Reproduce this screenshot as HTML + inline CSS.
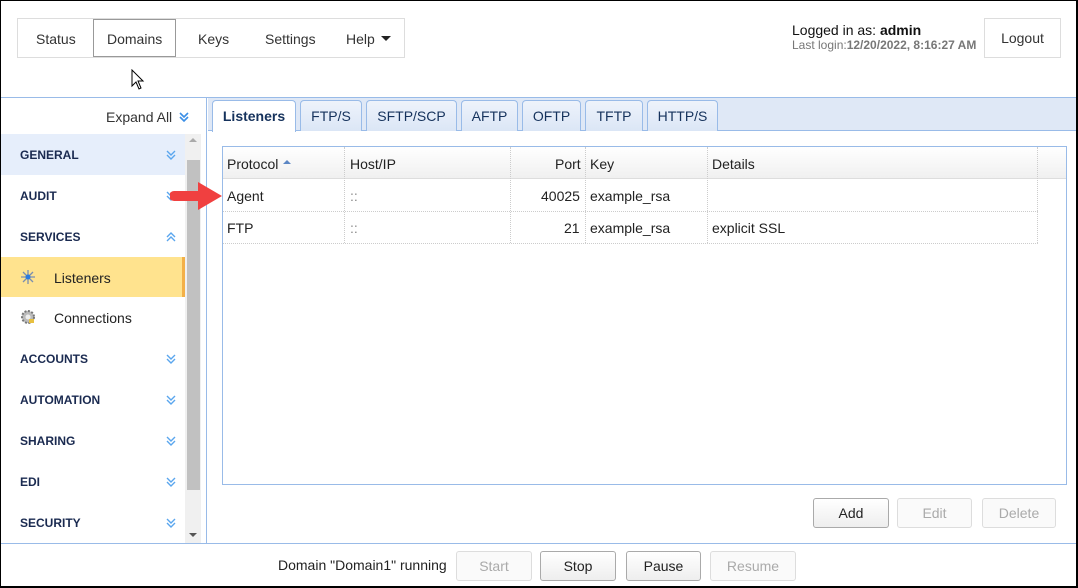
<!DOCTYPE html>
<html><head><meta charset="utf-8"><style>
*{box-sizing:border-box;margin:0;padding:0}
body{width:1078px;height:588px;font-family:"Liberation Sans",Arial,sans-serif;font-size:14px;color:#222;background:#fff;position:relative;overflow:hidden}
.frame{position:absolute;left:0;top:0;width:1078px;height:588px;border:1px solid #000;border-right-width:2px;border-bottom-width:2px;pointer-events:none;z-index:10}
.abs{position:absolute}
.nav{left:17px;top:18px;width:388px;height:40px;border:1px solid #ddd}
.nav span{position:absolute;top:12px;color:#333}
.dom{left:93px;top:19px;width:83px;height:38px;border:1px solid #999}
.btn{position:absolute;border:1px solid #aaa;border-radius:3px;background:linear-gradient(#fff,#eee);text-align:center;color:#222;font-size:14px}
.btn.dis{border-color:#ddd;color:#aaa;background:#fafafa}
.side .h{position:absolute;left:20px;font-weight:bold;font-size:12px;color:#1a2a50}
.chev{position:absolute;left:165px;width:12px;height:12px}
.tab{position:absolute;top:100px;height:31px;border:1px solid #99bbe8;border-bottom:none;border-radius:4px 4px 0 0;background:linear-gradient(#eef3fb,#dbe6f6);color:#15325c;text-align:center;line-height:30px;font-size:14px}
.cell{position:absolute;font-size:14px}
.vl{position:absolute;width:0;border-left:1px dotted #ccc}
.hl{position:absolute;height:0;border-top:1px dotted #ccc;left:223px;width:815px}
</style></head><body>
<div class="frame"></div>
<!-- header -->
<div class="abs nav"></div>
<div class="abs dom"></div>
<div class="abs" style="left:36px;top:31px;color:#333">Status</div>
<div class="abs" style="left:107px;top:31px;color:#333">Domains</div>
<div class="abs" style="left:198px;top:31px;color:#333">Keys</div>
<div class="abs" style="left:265px;top:31px;color:#333">Settings</div>
<div class="abs" style="left:346px;top:31px;color:#333">Help</div>
<div class="abs" style="left:381px;top:36px;border-left:5px solid transparent;border-right:5px solid transparent;border-top:5px solid #222"></div>
<svg class="abs" style="left:131px;top:69px" width="16" height="22" viewBox="0 0 16 22"><path d="M1 1 L1 17 L5 13 L8 20 L10 19 L7 12 L12 12 Z" fill="#fff" stroke="#000" stroke-width="1"/></svg>
<div class="abs" style="left:792px;top:22px;font-size:14px;color:#111">Logged in as: <b>admin</b></div>
<div class="abs" style="left:792px;top:38px;font-size:12px;color:#777">Last login:<b>12/20/2022, 8:16:27 AM</b></div>
<div class="abs" style="left:984px;top:18px;width:77px;height:40px;border:1px solid #ddd;text-align:center;line-height:38px;color:#333">Logout</div>
<div class="abs" style="left:0;top:97px;width:1078px;border-top:1px solid #99bbe8"></div>
<!-- sidebar -->
<div class="abs side" style="left:0;top:98px;width:207px;height:445px;border-right:1px solid #99bbe8">
 <div class="abs" style="left:106px;top:11px;color:#333">Expand All</div>
 <svg class="abs" style="left:178px;top:13px" width="12" height="12" viewBox="0 0 12 12"><path d="M2 2l4 4 4-4M2 6l4 4 4-4" fill="none" stroke="#3a8ee6" stroke-width="1.6"/></svg>
 <div class="abs" style="left:0;top:36px;width:185px;height:41px;background:#e6eefb"></div>
 <div class="abs" style="left:0;top:159px;width:185px;height:40px;background:#ffe38e;border-right:3px solid #f3b048"></div>
 <div class="abs" style="left:185px;top:36px;width:16px;height:409px;background:#f0f0f0"></div>
 <div class="abs" style="left:187px;top:62px;width:13px;height:330px;background:#c1c1c1"></div>
 <div class="abs" style="left:189px;top:40px;border-left:4px solid transparent;border-right:4px solid transparent;border-bottom:4px solid #aaa"></div>
 <div class="abs" style="left:189px;top:435px;border-left:4px solid transparent;border-right:4px solid transparent;border-top:4px solid #555"></div>
</div>
<div class="side">
 <div class="h" style="top:148px">GENERAL</div>
 <div class="h" style="top:189px">AUDIT</div>
 <div class="h" style="top:230px">SERVICES</div>
 <div class="h" style="top:352px">ACCOUNTS</div>
 <div class="h" style="top:393px">AUTOMATION</div>
 <div class="h" style="top:434px">SHARING</div>
 <div class="h" style="top:475px">EDI</div>
 <div class="h" style="top:516px">SECURITY</div>
 <svg class="chev" style="top:149px" viewBox="0 0 12 12"><path d="M2 2l4 4 4-4M2 6l4 4 4-4" fill="none" stroke="#5aa6ee" stroke-width="1.4"/></svg>
 <svg class="chev" style="top:190px" viewBox="0 0 12 12"><path d="M2 2l4 4 4-4M2 6l4 4 4-4" fill="none" stroke="#5aa6ee" stroke-width="1.4"/></svg>
 <svg class="chev" style="top:231px" viewBox="0 0 12 12"><path d="M2 6l4-4 4 4M2 10l4-4 4 4" fill="none" stroke="#5aa6ee" stroke-width="1.4"/></svg>
 <svg class="chev" style="top:353px" viewBox="0 0 12 12"><path d="M2 2l4 4 4-4M2 6l4 4 4-4" fill="none" stroke="#5aa6ee" stroke-width="1.4"/></svg>
 <svg class="chev" style="top:394px" viewBox="0 0 12 12"><path d="M2 2l4 4 4-4M2 6l4 4 4-4" fill="none" stroke="#5aa6ee" stroke-width="1.4"/></svg>
 <svg class="chev" style="top:435px" viewBox="0 0 12 12"><path d="M2 2l4 4 4-4M2 6l4 4 4-4" fill="none" stroke="#5aa6ee" stroke-width="1.4"/></svg>
 <svg class="chev" style="top:476px" viewBox="0 0 12 12"><path d="M2 2l4 4 4-4M2 6l4 4 4-4" fill="none" stroke="#5aa6ee" stroke-width="1.4"/></svg>
 <svg class="chev" style="top:517px" viewBox="0 0 12 12"><path d="M2 2l4 4 4-4M2 6l4 4 4-4" fill="none" stroke="#5aa6ee" stroke-width="1.4"/></svg>
 <svg class="abs" style="left:20px;top:269px" width="16" height="16" viewBox="0 0 16 16"><path d="M8 1v14M1 8h14M3 3l10 10M13 3L3 13" stroke="#7a8fb0" stroke-width="1.3"/><circle cx="8" cy="8" r="2.5" fill="#2a7be0"/></svg>
 <div class="abs" style="left:54px;top:270px">Listeners</div>
 <svg class="abs" style="left:20px;top:309px" width="16" height="16" viewBox="0 0 16 16"><circle cx="8" cy="8" r="6" fill="#bbb" stroke="#777" stroke-dasharray="2 1.5" stroke-width="2"/><circle cx="8" cy="8" r="2.5" fill="#eee"/><rect x="9" y="10" width="5" height="4" fill="#e8c040"/></svg>
 <div class="abs" style="left:54px;top:310px">Connections</div>
</div>
<!-- tabs -->
<div class="abs" style="left:208px;top:98px;width:868px;height:33px;background:#dfe8f6;border-bottom:1px solid #99bbe8"></div>
<div class="tab" style="left:212px;width:84px;background:#fff;height:32px;font-weight:bold;color:#15325c">Listeners</div>
<div class="tab" style="left:300px;width:62px">FTP/S</div>
<div class="tab" style="left:366px;width:91px">SFTP/SCP</div>
<div class="tab" style="left:461px;width:57px">AFTP</div>
<div class="tab" style="left:522px;width:59px">OFTP</div>
<div class="tab" style="left:585px;width:58px">TFTP</div>
<div class="tab" style="left:647px;width:71px">HTTP/S</div>
<!-- grid -->
<div class="abs" style="left:222px;top:146px;width:845px;height:339px;border:1px solid #99bbe8"></div>
<div class="abs" style="left:223px;top:147px;width:843px;height:32px;background:linear-gradient(#fff,#f0f0f0);border-bottom:1px solid #ddd"></div>
<div class="vl" style="left:344px;top:147px;height:96px"></div>
<div class="vl" style="left:510px;top:147px;height:96px"></div>
<div class="vl" style="left:585px;top:147px;height:96px"></div>
<div class="vl" style="left:707px;top:147px;height:96px"></div>
<div class="vl" style="left:1037px;top:147px;height:96px"></div>
<div class="hl" style="top:211px"></div>
<div class="hl" style="top:243px"></div>
<div class="cell" style="left:227px;top:156px">Protocol</div>
<div class="abs" style="left:283px;top:160px;border-left:4px solid transparent;border-right:4px solid transparent;border-bottom:4px solid #5b86c4"></div>
<div class="cell" style="left:350px;top:156px">Host/IP</div>
<div class="cell" style="left:555px;top:156px">Port</div>
<div class="cell" style="left:590px;top:156px">Key</div>
<div class="cell" style="left:712px;top:156px">Details</div>
<div class="cell" style="left:227px;top:188px">Agent</div>
<div class="cell" style="left:350px;top:188px;color:#888">::</div>
<div class="cell" style="left:541px;top:188px">40025</div>
<div class="cell" style="left:590px;top:188px">example_rsa</div>
<div class="cell" style="left:227px;top:220px">FTP</div>
<div class="cell" style="left:350px;top:220px;color:#888">::</div>
<div class="cell" style="left:564px;top:220px">21</div>
<div class="cell" style="left:590px;top:220px">example_rsa</div>
<div class="cell" style="left:712px;top:220px">explicit SSL</div>
<svg class="abs" style="left:170px;top:181px" width="54" height="30" viewBox="0 0 54 30"><path d="M4 10h24V1l24 14-24 14V20H4a5 5 0 0 1 0-10z" fill="#f04040"/></svg>
<!-- buttons -->
<div class="btn" style="left:813px;top:498px;width:76px;height:30px;line-height:28px">Add</div>
<div class="btn dis" style="left:897px;top:498px;width:75px;height:30px;line-height:28px">Edit</div>
<div class="btn dis" style="left:982px;top:498px;width:74px;height:30px;line-height:28px">Delete</div>
<!-- footer -->
<div class="abs" style="left:0;top:543px;width:1078px;border-top:1px solid #99bbe8"></div>
<div class="abs" style="left:278px;top:557px">Domain "Domain1" running</div>
<div class="btn dis" style="left:456px;top:551px;width:76px;height:30px;line-height:28px">Start</div>
<div class="btn" style="left:540px;top:551px;width:76px;height:30px;line-height:28px">Stop</div>
<div class="btn" style="left:626px;top:551px;width:75px;height:30px;line-height:28px">Pause</div>
<div class="btn dis" style="left:710px;top:551px;width:86px;height:30px;line-height:28px">Resume</div>
</body></html>
